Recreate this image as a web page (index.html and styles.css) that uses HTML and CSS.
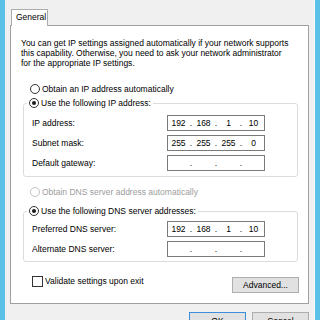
FILE: index.html
```html
<!DOCTYPE html>
<html lang="en">
<head>
<meta charset="utf-8">
<title>Internet Protocol Version 4 (TCP/IPv4) Properties</title>
<link rel="stylesheet" href="styles.css">
</head>
<body>
<div class="dlg">
	<div class="tabs">
		<div class="tab">General</div>
	</div>
	<div class="panel">
		<p class="intro">You can get IP settings assigned automatically if your network supports<br>this capability. Otherwise, you need to ask your network administrator<br>for the appropriate IP settings.</p>

		<div class="opt first"><span class="radio"></span>Obtain an IP address automatically</div>

		<fieldset class="group ip">
			<legend><span class="radio on"></span>Use the following IP address:</legend>
			<div class="row"><span class="lbl">IP address:</span><span class="ipbox"><span>192</span><i>.</i><span>168</span><i>.</i><span>1</span><i>.</i><span>10</span></span></div>
			<div class="row"><span class="lbl">Subnet mask:</span><span class="ipbox"><span>255</span><i>.</i><span>255</span><i>.</i><span>255</span><i>.</i><span>0</span></span></div>
			<div class="row"><span class="lbl">Default gateway:</span><span class="ipbox"><span></span><i>.</i><span></span><i>.</i><span></span><i>.</i><span></span></span></div>
		</fieldset>

		<div class="opt off"><span class="radio"></span>Obtain DNS server address automatically</div>

		<fieldset class="group dns">
			<legend><span class="radio on"></span>Use the following DNS server addresses:</legend>
			<div class="row"><span class="lbl">Preferred DNS server:</span><span class="ipbox"><span>192</span><i>.</i><span>168</span><i>.</i><span>1</span><i>.</i><span>10</span></span></div>
			<div class="row"><span class="lbl">Alternate DNS server:</span><span class="ipbox"><span></span><i>.</i><span></span><i>.</i><span></span><i>.</i><span></span></span></div>
		</fieldset>

		<div class="bottom">
			<div class="check"><span class="box"></span>Validate settings upon exit</div>
			<div class="btn adv">Advanced...</div>
		</div>
	</div>
	<div class="actions">
		<div class="btn ok">OK</div>
		<div class="btn">Cancel</div>
	</div>
</div>
</body>
</html>
```

FILE: styles.css
```css
html, body { margin: 0; padding: 0; }
body { background: #5bc1e6; width: 320px; height: 320px; overflow: hidden; font-family: "Liberation Sans", Arial, sans-serif; font-size: 8.5px; color: #000; }
.dlg { margin-left: 5px; width: 310px; height: 320px; box-sizing: border-box; background: #f0f0f0; border-right: 1px solid #fbfbfb; padding: 9px 5px 0 5px; }
.tabs { display: flex; height: 16px; padding-left: 1px; }
.tab { position: relative; z-index: 1; width: 31px; height: 16px; background: #fff; border: 1px solid #adadad; border-bottom: none; line-height: 15px; padding-left: 4px; }
.panel { height: 279px; box-sizing: border-box; background: #fff; border: 1px solid #a0a0a0; padding: 12px 9px 0 10px; }
.intro { margin: 0; line-height: 10px; white-space: nowrap; }
.opt { display: flex; align-items: center; height: 12px; line-height: 12px; padding-left: 9px; }
.opt.first { margin-top: 15px; }
.opt.off { margin-top: 9px; color: #9d9d9d; }
.opt.off .radio { border-color: #c2c2c2; }
.radio { display: inline-block; width: 8px; height: 8px; border: 1px solid #333; border-radius: 50%; background: #fff; margin-right: 2px; position: relative; flex: none; }
.radio.on::after { content: ""; position: absolute; left: 2px; top: 2px; width: 4px; height: 4px; border-radius: 50%; background: #1a1a1a; }
.group { margin: 2px 1px 0 2px; padding: 6px 8px 5px 8px; border: 1px solid #dcdcdc; border-radius: 3px; }
.group.dns { margin-top: 7px; padding: 4px 8px 4px 8px; }
.group legend { display: flex; align-items: center; height: 12px; line-height: 12px; padding: 0 2px; margin-left: -5px; }
.row { display: flex; align-items: center; height: 16px; margin-bottom: 4px; }
.row:last-child { margin-bottom: 0; }
.lbl { width: 135px; flex: none; }
.ipbox { display: flex; width: 96px; height: 14px; border: 1px solid #7a7a7a; background: #fff; line-height: 14px; }
.ipbox span { width: 21px; text-align: center; }
.ipbox i { font-style: normal; width: 4px; text-align: center; }
.bottom { display: flex; justify-content: space-between; align-items: flex-start; margin-top: 13px; padding-left: 11px; }
.check { display: flex; align-items: center; height: 12px; line-height: 12px; }
.check .box { width: 9px; height: 9px; border: 1px solid #333; background: #fff; margin-right: 2px; }
.btn { box-sizing: border-box; height: 16px; line-height: 14px; text-align: center; background: #e1e1e1; border: 1px solid #adadad; }
.adv { width: 67px; margin-top: 2px; }
.actions { display: flex; justify-content: flex-end; gap: 6px; margin-top: 8px; }
.actions .btn { width: 57px; height: 18px; line-height: 16px; }
.btn.ok { border-color: #3c8ddc; }
```
